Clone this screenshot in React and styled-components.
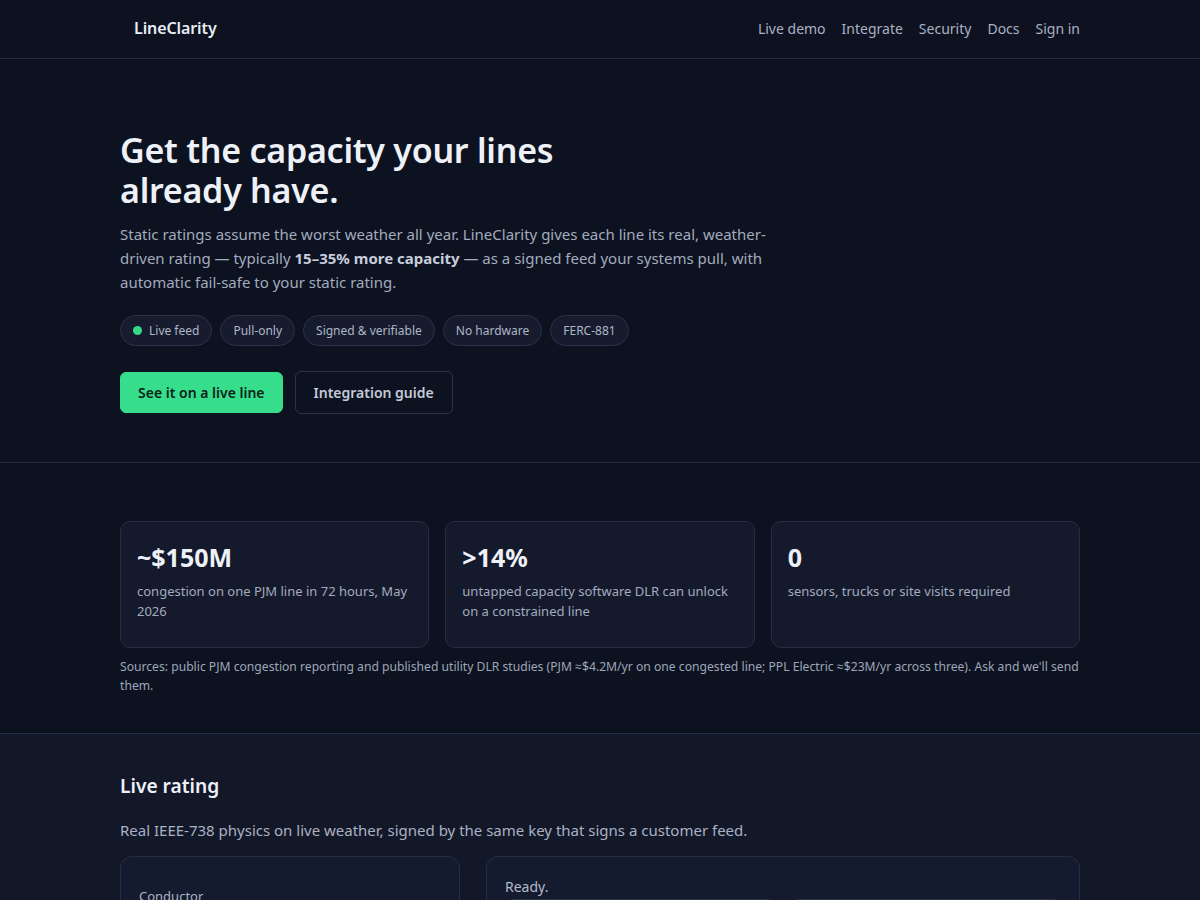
import React from "react";
import styled, { createGlobalStyle } from "styled-components";

const Global = createGlobalStyle`
  * { box-sizing: border-box; }
  html, body { margin: 0; padding: 0; background: #0d1220; }
  body {
    font-family: "Noto Sans", "Open Sans", "DejaVu Sans", sans-serif;
    color: #e6eaf3;
    -webkit-font-smoothing: antialiased;
  }
`;

const Page = styled.div`
  min-height: 100vh;
  background: #0d1220;
`;

const Container = styled.div`
  width: 960px;
  margin: 0 auto;
`;

const Header = styled.header`
  height: 59px;
  padding-bottom: 2px;
  border-bottom: 1px solid #262c3c;
  background: #0e1220;
`;

const NavBar = styled(Container)`
  height: 100%;
  display: flex;
  align-items: center;
  justify-content: space-between;
`;

const Brand = styled.a`
  padding-left: 14px;
  font-size: 16px;
  font-weight: 600;
  color: #e8ecf5;
  text-decoration: none;
  letter-spacing: -0.1px;
`;

const NavLinks = styled.nav`
  display: flex;
  gap: 16px;
`;

const NavLink = styled.a`
  font-size: 14px;
  color: #a9b1c4;
  text-decoration: none;
`;

const Hero = styled.section`
  padding: 71px 0 48px;
  border-bottom: 1px solid #272d42;
`;

const Title = styled.h1`
  margin: 0;
  max-width: 520px;
  font-size: 34px;
  line-height: 40px;
  font-weight: 600;
  letter-spacing: -0.25px;
  color: #eef1f8;
`;

const Lead = styled.p`
  margin: 12px 0 0;
  max-width: 660px;
  font-size: 15px;
  line-height: 24px;
  color: #a3abbe;

  strong {
    color: #c6cddd;
    font-weight: 700;
  }
`;

const Pills = styled.div`
  display: flex;
  flex-wrap: wrap;
  gap: 8px;
  margin-top: 21px;
`;

const Pill = styled.span`
  display: inline-flex;
  align-items: center;
  gap: 7px;
  height: 31px;
  padding: 0 12px;
  border-radius: 16px;
  background: #161c2d;
  border: 1px solid #2a3248;
  font-size: 12px;
  color: #aeb6c8;
`;

const Dot = styled.i`
  width: 9px;
  height: 9px;
  border-radius: 50%;
  background: #34d98a;
`;

const Actions = styled.div`
  display: flex;
  gap: 12px;
  margin-top: 25px;
`;

const Button = styled.a`
  display: inline-flex;
  align-items: center;
  height: ${(p) => (p.$primary ? "41px" : "43px")};
  margin-top: ${(p) => (p.$primary ? "1px" : "0")};
  padding: 0 ${(p) => (p.$primary ? "17px" : "18px")};
  border-radius: 6px;
  font-size: 14px;
  font-weight: 600;
  text-decoration: none;
  background: ${(p) => (p.$primary ? "#36de8c" : "transparent")};
  color: ${(p) => (p.$primary ? "#0c2218" : "#c3cada")};
  border: 1px solid ${(p) => (p.$primary ? "#36de8c" : "#2c3347")};
`;

const Stats = styled.section`
  padding: 58px 0 38px;
  border-bottom: 1px solid #23304a;
`;

const StatGrid = styled.div`
  display: grid;
  grid-template-columns: repeat(3, 1fr);
  gap: 16px;
`;

const StatCard = styled.div`
  height: 127px;
  padding: 18px 16px 16px;
  border-radius: 10px;
  background: #141a2c;
  border: 1px solid #272e44;
`;

const StatValue = styled.div`
  font-size: 25px;
  line-height: 34px;
  font-weight: 700;
  color: #eef1f8;
`;

const StatText = styled.div`
  margin-top: 7px;
  font-size: 13px;
  line-height: 20px;
  color: #a3abbe;
`;

const Sources = styled.p`
  margin: 9px 0 0;
  font-size: 12.15px;
  line-height: 19px;
  color: #9ea6b9;
`;

const Live = styled.section`
  background: #131829;
  padding: 38px 0 40px;
`;

const SectionTitle = styled.h2`
  margin: 0;
  font-size: 19.2px;
  line-height: 28px;
  font-weight: 600;
  color: #eef1f8;
`;

const SectionLead = styled.p`
  margin: 18px 0 0;
  font-size: 15px;
  line-height: 24px;
  color: #a9b1c3;
`;

const DemoGrid = styled.div`
  display: grid;
  grid-template-columns: 340px 1fr;
  gap: 26px;
  margin-top: 14px;
`;

const Panel = styled.div`
  min-height: 260px;
  border-radius: 12px;
  background: #151b2e;
  border: 1px solid #272e44;
  padding: ${(p) => p.$pad || "18px"};
`;

const FieldLabel = styled.label`
  display: block;
  font-size: 13px;
  line-height: 18px;
  color: #a9b1c3;
`;

const Status = styled.div`
  font-size: 14px;
  line-height: 20px;
  color: #b2bacb;
`;

const ReadoutRow = styled.div`
  display: grid;
  grid-template-columns: 1fr 1fr;
  gap: 14px;
  margin-top: 2px;
`;

const Readout = styled.div`
  height: 90px;
  border-radius: 8px;
  border: 1px solid #2a3248;
  background: #12182a;
`;

export default function App() {
  return (
    <Page>
      <Global />
      <Header>
        <NavBar>
          <Brand href="#">LineClarity</Brand>
          <NavLinks>
            <NavLink href="#">Live demo</NavLink>
            <NavLink href="#">Integrate</NavLink>
            <NavLink href="#">Security</NavLink>
            <NavLink href="#">Docs</NavLink>
            <NavLink href="#">Sign in</NavLink>
          </NavLinks>
        </NavBar>
      </Header>

      <Hero>
        <Container>
          <Title>Get the capacity your lines already have.</Title>
          <Lead>
            Static ratings assume the worst weather all year. LineClarity gives each line its
            real, weather-driven rating — typically <strong>15–35% more capacity</strong> — as a
            signed feed your systems pull, with automatic fail-safe to your static rating.
          </Lead>
          <Pills>
            <Pill>
              <Dot />
              Live feed
            </Pill>
            <Pill>Pull-only</Pill>
            <Pill>Signed &amp; verifiable</Pill>
            <Pill>No hardware</Pill>
            <Pill>FERC-881</Pill>
          </Pills>
          <Actions>
            <Button $primary href="#">See it on a live line</Button>
            <Button href="#">Integration guide</Button>
          </Actions>
        </Container>
      </Hero>

      <Stats>
        <Container>
          <StatGrid>
            <StatCard>
              <StatValue>~$150M</StatValue>
              <StatText>congestion on one PJM line in 72 hours, May 2026</StatText>
            </StatCard>
            <StatCard>
              <StatValue>&gt;14%</StatValue>
              <StatText>untapped capacity software DLR can unlock on a constrained line</StatText>
            </StatCard>
            <StatCard>
              <StatValue>0</StatValue>
              <StatText>sensors, trucks or site visits required</StatText>
            </StatCard>
          </StatGrid>
          <Sources>
            Sources: public PJM congestion reporting and published utility DLR studies (PJM
            ≈$4.2M/yr on one congested line; PPL Electric ≈$23M/yr across three). Ask and we'll
            send them.
          </Sources>
        </Container>
      </Stats>

      <Live>
        <Container>
          <SectionTitle>Live rating</SectionTitle>
          <SectionLead>
            Real IEEE-738 physics on live weather, signed by the same key that signs a customer
            feed.
          </SectionLead>
          <DemoGrid>
            <Panel $pad="30px 18px 18px">
              <FieldLabel>Conductor</FieldLabel>
            </Panel>
            <Panel $pad="20px 18px 18px">
              <Status>Ready.</Status>
              <ReadoutRow>
                <Readout />
                <Readout />
              </ReadoutRow>
            </Panel>
          </DemoGrid>
        </Container>
      </Live>
    </Page>
  );
}
